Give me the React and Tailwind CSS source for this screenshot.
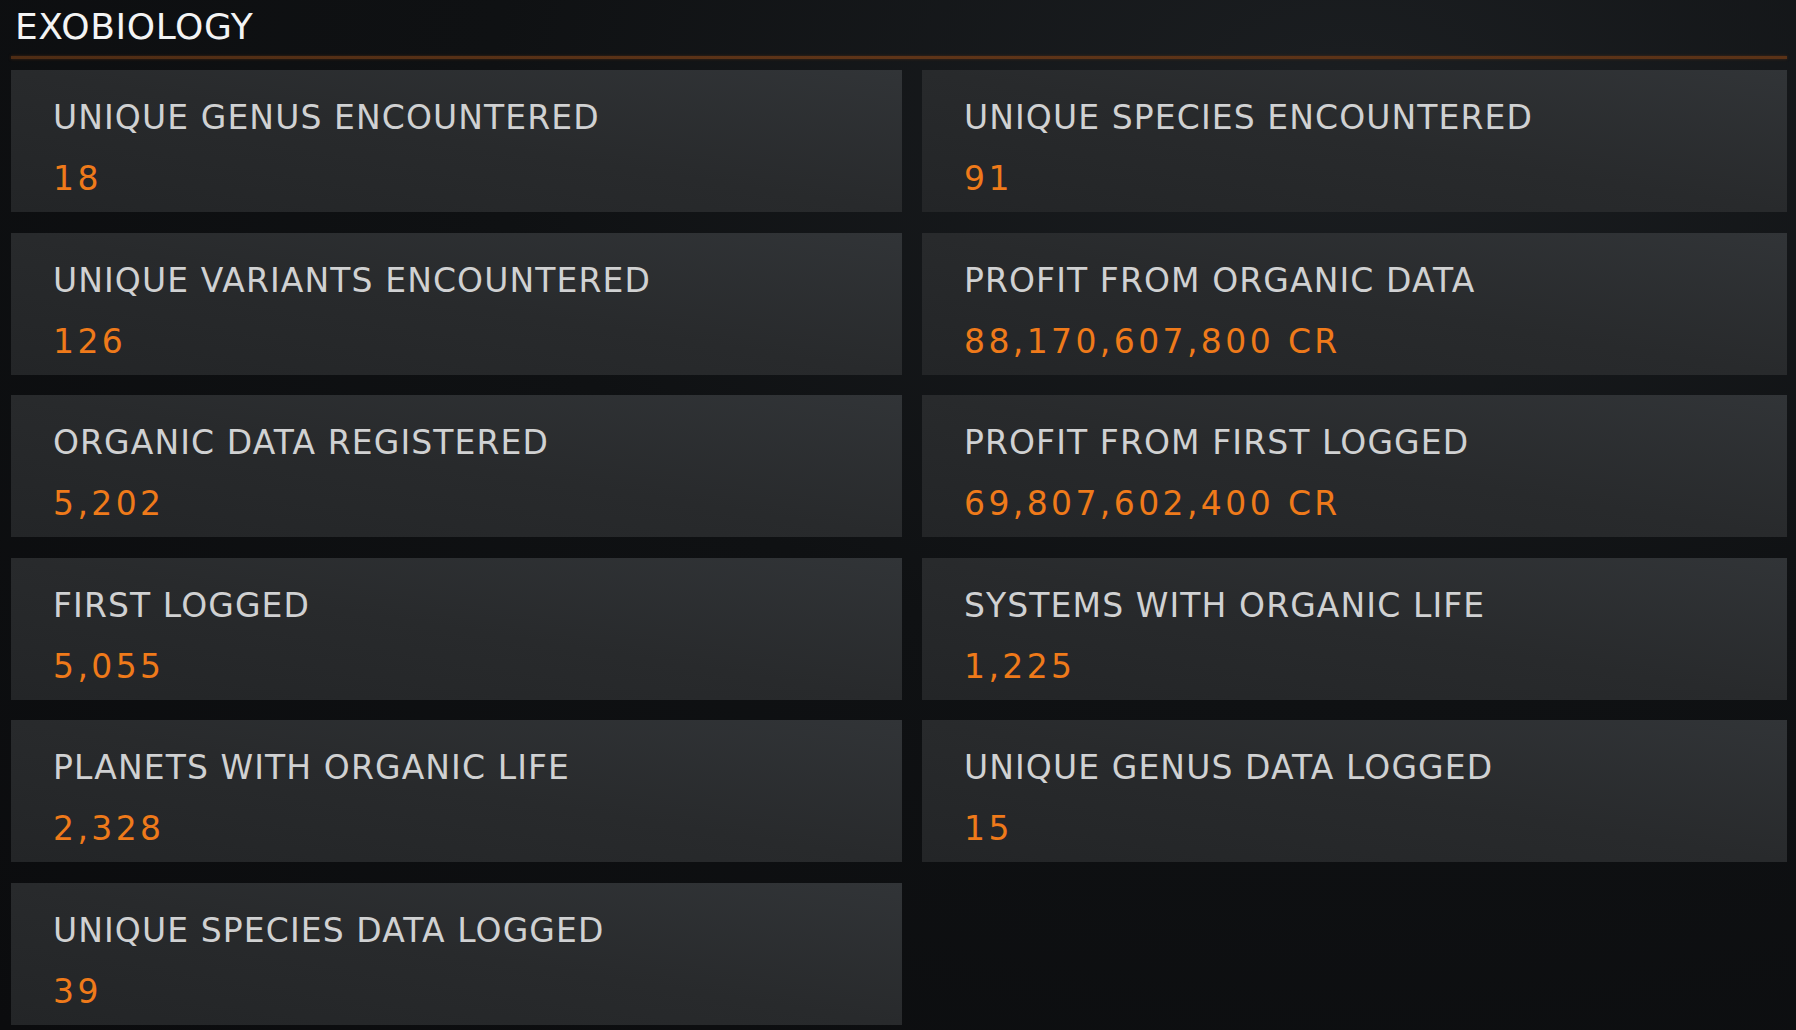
import React from "react";

const stats = [
  ["UNIQUE GENUS ENCOUNTERED", "18"],
  ["UNIQUE SPECIES ENCOUNTERED", "91"],
  ["UNIQUE VARIANTS ENCOUNTERED", "126"],
  ["PROFIT FROM ORGANIC DATA", "88,170,607,800 CR"],
  ["ORGANIC DATA REGISTERED", "5,202"],
  ["PROFIT FROM FIRST LOGGED", "69,807,602,400 CR"],
  ["FIRST LOGGED", "5,055"],
  ["SYSTEMS WITH ORGANIC LIFE", "1,225"],
  ["PLANETS WITH ORGANIC LIFE", "2,328"],
  ["UNIQUE GENUS DATA LOGGED", "15"],
  ["UNIQUE SPECIES DATA LOGGED", "39"],
];

function Card({ label, value }) {
  return (
    <div className="h-[142px] bg-gradient-to-tr from-[#232527] via-[#282a2c] to-[#313437] pl-[42px] pt-[28px]">
      <div className="text-[33px] leading-[40px] tracking-[1.1px] text-[#d0d1d2] whitespace-nowrap">
        {label}
      </div>
      <div className="mt-[21px] text-[33px] leading-[40px] tracking-[3.4px] text-[#ef7a1a] whitespace-nowrap">
        {value}
      </div>
    </div>
  );
}

export default function App() {
  return (
    <div
      className="w-[1796px] h-[1030px] overflow-hidden bg-[radial-gradient(ellipse_at_75%_10%,#1b1e21_0%,#0f1113_45%,#0b0c0e_100%)] pl-[11px] pr-[9px]"
      style={{ fontFamily: '"DejaVu Sans", "Liberation Sans", sans-serif' }}
    >
      <div className="pt-[7px] pl-[4px] text-[36px] leading-[40px] tracking-[0.6px] text-[#f3f4f4] whitespace-nowrap">
        EXOBIOLOGY
      </div>
      <div className="mt-[9px] h-[3px] bg-gradient-to-r from-[#4e2c14] via-[#5e3418] to-[#5a3217] shadow-[0_0_3px_rgba(120,60,20,0.5)]" />
      <div className="mt-[11px] grid grid-cols-[891px_865px] gap-x-[20px] gap-y-[20.6px]">
        {stats.map(([l, v]) => (
          <Card key={l} label={l} value={v} />
        ))}
      </div>
    </div>
  );
}
